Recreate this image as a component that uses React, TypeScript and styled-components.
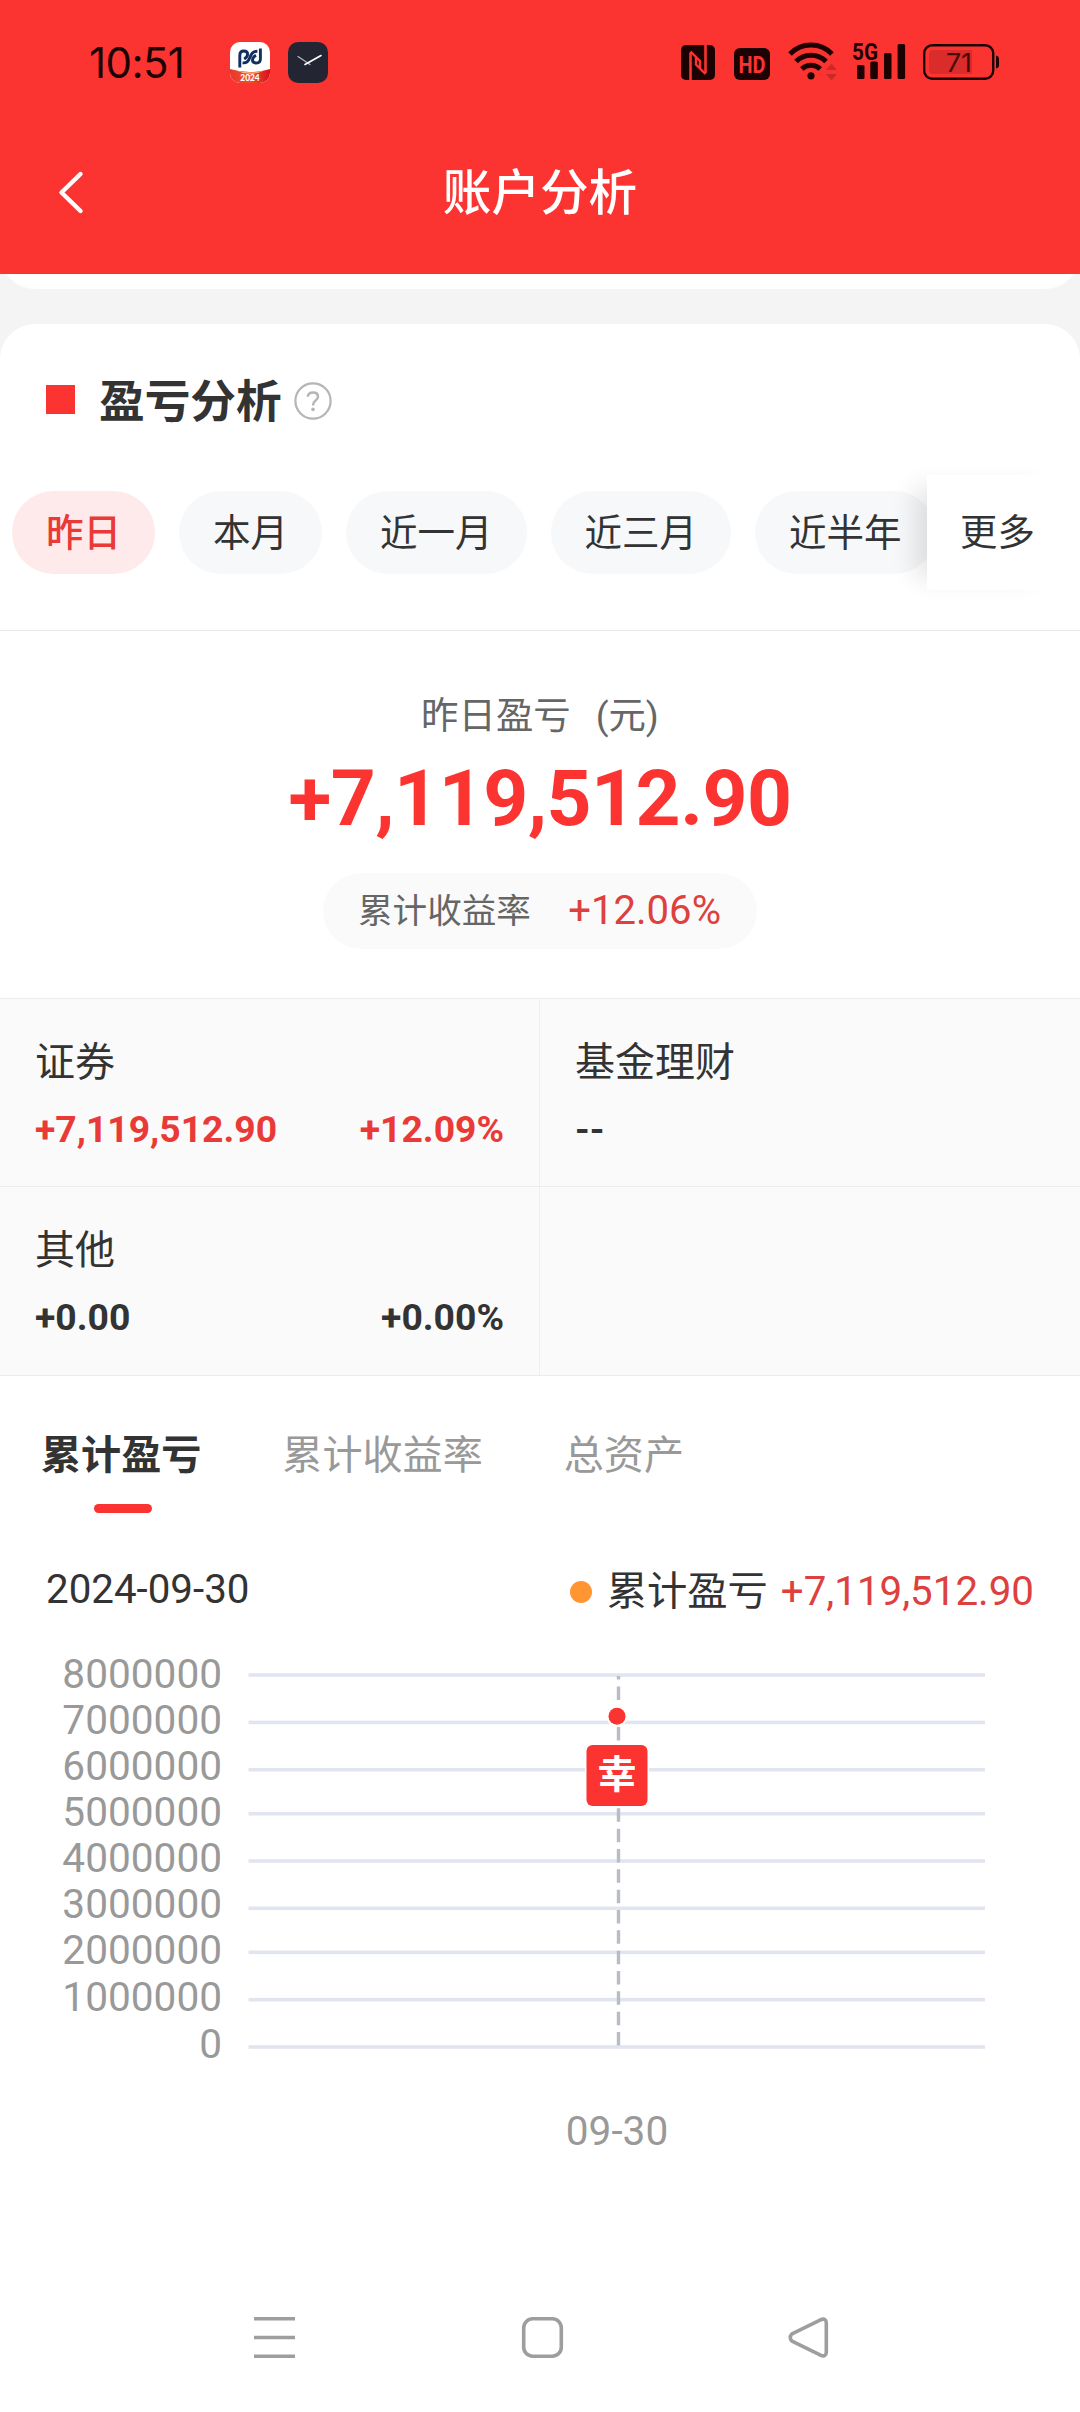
import React from "react";
import styled, { createGlobalStyle } from "styled-components";

const RED = "#fb3431";
const INK = "#1c0202";

const GlobalStyle = createGlobalStyle`
  * { box-sizing: border-box; }
  body {
    margin: 0;
    background: #f4f4f4;
    font-family: Roboto, "Noto Sans CJK SC", sans-serif;
    color: #333;
  }
`;

const Page = styled.div`
  width: 1080px;
  height: 2412px;
  display: flex;
  flex-direction: column;
  overflow: hidden;
  background: #f4f4f4;
`;

/* ---------- header ---------- */

const Header = styled.header`
  flex: none;
  height: 274px;
  background: ${RED};
`;

const StatusBar = styled.div`
  height: 124px;
  padding: 0 80px 0 89px;
  display: flex;
  align-items: center;
  justify-content: space-between;
`;

const StatusGroup = styled.div`
  display: flex;
  align-items: center;
`;

const Clock = styled.span`
  width: 141px;
  font-family: Inter, sans-serif;
  font-size: 42px;
  letter-spacing: -0.6px;
  line-height: 50px;
  color: ${INK};
  white-space: nowrap;
  padding-top: 2px;
`;

const AppIcon = styled.svg`
  width: 40px;
  height: 41px;
  margin-right: 18px;
`;

const StatusIcons = styled.svg`
  width: 320px;
  height: 54px;
  margin-top: -1px;
  overflow: visible;
`;

const TitleBar = styled.div`
  height: 138px;
  padding: 0 48px;
  display: grid;
  grid-template-columns: 60px 1fr 60px;
  align-items: center;
`;

const BackIcon = styled.svg`
  width: 44px;
  height: 50px;
`;

const PageTitle = styled.h1`
  margin: 2px 0 0;
  text-align: center;
  font-size: 48.6px;
  font-weight: 500;
  line-height: 60px;
  color: #fff;
`;

/* ---------- cards ---------- */

const PreviousCardClip = styled.div`
  flex: none;
  height: 15px;
  margin-bottom: 35px;
  display: flex;
  align-items: flex-end;
  overflow: hidden;
`;

const PreviousCard = styled.div`
  flex: 1;
  height: 80px;
  border-radius: 35px;
  background: #fff;
`;

const Card = styled.main`
  flex: 1;
  display: flex;
  flex-direction: column;
  border-radius: 35px 35px 0 0;
  background: #fff;
`;

const SectionHead = styled.div`
  height: 151px;
  padding-left: 46px;
  display: flex;
  align-items: center;
`;

const Marker = styled.i`
  width: 29px;
  height: 29px;
  margin-right: 24px;
  background: ${RED};
`;

const SectionTitle = styled.h2`
  margin: 6px 12px 0 0;
  font-size: 45.7px;
  font-weight: 700;
  line-height: 60px;
`;

const HelpIcon = styled.svg`
  width: 38px;
  height: 38px;
  margin-top: 2px;
`;

/* ---------- range filter ---------- */

const FilterRow = styled.div`
  height: 115px;
  display: flex;
  align-items: center;
  overflow: visible;
`;

const PillScroller = styled.div`
  width: 927px;
  padding-left: 12px;
  display: flex;
  gap: 24px;
  overflow: hidden;
`;

const Pill = styled.button<{ $active?: boolean }>`
  flex: none;
  height: 83px;
  padding: 0 34px;
  border: 0;
  border-radius: 42px;
  font-family: inherit;
  font-size: 37.5px;
  line-height: 80px;
  font-weight: ${(p) => (p.$active ? 500 : 400)};
  color: ${(p) => (p.$active ? "#e93a38" : "#333")};
  background: ${(p) => (p.$active ? "#feeaea" : "#f7f8fa")};
`;

const MoreButton = styled.button`
  width: 145px;
  height: 115px;
  padding: 0 4px 5px 0;
  border: 0;
  font-family: inherit;
  font-size: 37.4px;
  color: #333;
  background: #fff;
  box-shadow: -24px 0 24px -12px rgba(0, 0, 0, 0.11);
`;

const Divider = styled.div`
  height: 1px;
  margin-top: 40px;
  background: #e8e8e8;
`;

/* ---------- summary ---------- */

const Summary = styled.section`
  height: 367px;
  padding-top: 55px;
  display: flex;
  flex-direction: column;
  align-items: center;
`;

const SummaryLabel = styled.div`
  display: flex;
  gap: 25px;
  font-size: 37.4px;
  line-height: 60px;
  color: #666;
`;

const Total = styled.div`
  margin-top: 6px;
  font-size: 78.5px;
  font-weight: 700;
  letter-spacing: -0.5px;
  line-height: 92px;
  color: ${RED};
`;

const RatePill = styled.div`
  width: 434px;
  height: 76px;
  margin-top: 29px;
  padding: 0 36px 6px 35px;
  display: flex;
  align-items: center;
  justify-content: space-between;
  border-radius: 38px;
  background: #fafafa;
  font-size: 34.6px;
  color: #666;
`;

const Rate = styled.span`
  margin-top: 4px;
  font-size: 40.1px;
  color: #dd403d;
`;

/* ---------- breakdown ---------- */

const Breakdown = styled.section`
  display: grid;
  grid-template-columns: 540px 540px;
  grid-template-rows: 188px 189px;
  border-bottom: 1px solid #ececec;
`;

const Cell = styled.div`
  padding: 36px 35px 0 35px;
  border-top: 1px solid #ececec;
  background: #fafafa;

  &:nth-child(odd) {
    border-right: 1px solid #efefef;
  }
`;

const CellName = styled.div`
  font-size: 40px;
  line-height: 56px;
`;

const CellValues = styled.div<{ $up?: boolean }>`
  margin-top: 12px;
  display: flex;
  justify-content: space-between;
  font-size: 37.3px;
  font-weight: 700;
  line-height: 52px;
  color: ${(p) => (p.$up ? "#e93a38" : "#333")};
`;

/* ---------- tabs ---------- */

const Tabs = styled.nav`
  height: 138px;
  padding: 50px 41px 0;
  display: flex;
  gap: 81px;
`;

const Tab = styled.div<{ $active?: boolean }>`
  display: flex;
  flex-direction: column;
  align-items: center;
  font-size: 40.1px;
  line-height: 60px;
  font-weight: ${(p) => (p.$active ? 700 : 400)};
  color: ${(p) => (p.$active ? "#333" : "#999")};
`;

const TabBar = styled.i`
  width: 58px;
  height: 9px;
  margin: 18px 0 0 3px;
  border-radius: 5px;
  background: ${RED};
`;

const LegendRow = styled.div`
  height: 146px;
  padding: 8px 46px 0 46px;
  display: flex;
  align-items: center;
  justify-content: space-between;
  font-size: 40.3px;
  line-height: 56px;
`;

const DateText = styled.span`
  margin-top: -3px;
`;

const Legend = styled.div`
  display: flex;
  align-items: center;
  margin-top: 2px;
`;

const LegendDot = styled.i`
  width: 22px;
  height: 22px;
  margin-right: 15px;
  border-radius: 50%;
  background: #ff9632;
`;

const LegendValue = styled.span`
  margin-left: 13px;
  color: #dd403d;
`;

const ChartSvg = styled.svg`
  flex: none;
  width: 1080px;
  height: 540px;
  overflow: visible;
  font-family: Roboto, "Noto Sans CJK SC", sans-serif;
  font-size: 40.6px;
`;

const SystemNav = styled.svg`
  flex: none;
  width: 1080px;
  height: 140px;
  margin-top: auto;
`;

const periods = ["昨日", "本月", "近一月", "近三月", "近半年"];

const breakdown = [
  { name: "证券", amount: "+7,119,512.90", rate: "+12.09%", up: true },
  { name: "基金理财", amount: "--" },
  { name: "其他", amount: "+0.00", rate: "+0.00%" },
  null,
];

/* y positions are relative to the top of the chart */
const axis = [
  { value: 8000000, label: 28, line: 15 },
  { value: 7000000, label: 74, line: 62.4 },
  { value: 6000000, label: 120, line: 109.7 },
  { value: 5000000, label: 166, line: 153.7 },
  { value: 4000000, label: 212.2, line: 201 },
  { value: 3000000, label: 258.3, line: 248.3 },
  { value: 2000000, label: 304.4, line: 292.3 },
  { value: 1000000, label: 350.5, line: 339.7 },
  { value: 0, label: 397.5, line: 387 },
];

function Chart() {
  return (
    <ChartSvg viewBox="0 0 1080 540">
      {axis.map((a) => (
        <g key={a.value}>
          <text x="222" y={a.label} textAnchor="end" fill="#999">
            {a.value}
          </text>
          <rect x="248.5" y={a.line - 1.8} width="736.5" height="3.6" fill="#e1e5f0" />
        </g>
      ))}
      <line x1="618.5" y1="385.5" x2="618.5" y2="16" stroke="#b8bcc6" strokeWidth="3.4" strokeDasharray="13.5 6.83" />
      <circle cx="617" cy="56.3" r="10.5" fill="#fff" />
      <circle cx="617" cy="56.3" r="8.5" fill={RED} />
      <rect x="585" y="83.5" width="64" height="64" rx="7" fill="#fff" />
      <rect x="586.5" y="85" width="61" height="61" rx="6" fill={RED} />
      <text x="617" y="127.5" fontSize="39" fontWeight="700" textAnchor="middle" fill="#fff">
        幸
      </text>
      <text x="617" y="484.5" textAnchor="middle" fill="#999">
        09-30
      </text>
    </ChartSvg>
  );
}

function BrokerIcon() {
  return (
    <AppIcon viewBox="0 0 40 41">
      <defs>
        <clipPath id="brokerClip">
          <rect width="40" height="41" rx="10" />
        </clipPath>
        <linearGradient id="brokerBand" x1="0" y1="0" x2="1" y2="0">
          <stop offset="0" stopColor="#e8382a" />
          <stop offset="0.5" stopColor="#f0502c" />
          <stop offset="1" stopColor="#d9101c" />
        </linearGradient>
      </defs>
      <g clipPath="url(#brokerClip)">
        <rect width="40" height="41" fill="#fff" />
        <path d="M0 27 Q20 33 40 27 V41 H0Z" fill="url(#brokerBand)" />
        <path d="M6 28.6 Q20 32.6 34 28.6 Q20 35 6 28.6Z" fill="#fbc58c" />
        <g fill="none" stroke="#12305f" strokeWidth="2.9">
          <path d="M9.8 25.5 V13.4 Q9.8 9 13.8 9 Q17.6 9 17.6 12.2 Q17.6 15 14.2 17" />
          <path d="M12.6 20.8 Q17.6 21.6 19.9 15.4 Q22.2 9 27.4 9.2" />
          <path d="M30.4 6.5 V17 Q30.4 21 26.4 21 Q22.5 21 22.5 18 Q22.5 15.2 26 13.2" />
        </g>
        <text x="20" y="38.6" textAnchor="middle" fontFamily="Lato, sans-serif" fontSize="8.4" fontWeight="900" fill="#fff">
          2024
        </text>
      </g>
    </AppIcon>
  );
}

function ClockIcon() {
  return (
    <AppIcon viewBox="0 0 40 41">
      <rect width="40" height="41" rx="10" fill="#232632" />
      <path d="M10 14.5 L22 22.5" stroke="#b9bac0" strokeWidth="1.2" strokeLinecap="round" />
      <path d="M17 22.5 L33 13.5" stroke="#fff" strokeWidth="1.6" strokeLinecap="round" />
    </AppIcon>
  );
}

function SystemIcons() {
  return (
    <StatusIcons viewBox="680 35 320 54">
      <rect x="681" y="45" width="34" height="35" rx="5" fill={INK} />
      <path d="M690.5 80 V52.5 M705.5 73 V45" fill="none" stroke={RED} strokeWidth="2.6" />
      <path d="M690.5 51.5 L700 61 V68.5 M696 57 V64.5 L705.5 74" fill="none" stroke={RED} strokeWidth="2.4" />
      <rect x="734" y="48" width="36" height="32" rx="6" fill={INK} />
      <text x="752" y="72.6" textAnchor="middle" fontFamily="Roboto, sans-serif" fontSize="24" fontWeight="700" textLength="27" lengthAdjust="spacingAndGlyphs" fill={RED}>
        HD
      </text>
      <g fill="none" stroke={INK} strokeWidth="5">
        <path d="M790 54 A29 29 0 0 1 832 54" />
        <path d="M796 61.5 A21 21 0 0 1 826 61.5" />
        <path d="M801.8 69 A13 13 0 0 1 820.2 69" />
      </g>
      <circle cx="811" cy="75.8" r="3.6" fill={INK} />
      <path d="M826 70 L831.5 63.5 L837 70Z M826 74 L831.5 80.5 L837 74Z" fill="#cc2a28" />
      <text x="852" y="59.8" fontFamily="Roboto, sans-serif" fontSize="24.5" fontWeight="700" textLength="26" lengthAdjust="spacingAndGlyphs" fill={INK}>
        5G
      </text>
      <g fill={INK}>
        <rect x="857" y="65" width="7.5" height="14" rx="1.5" />
        <rect x="870.3" y="61.5" width="7.5" height="17.5" rx="1.5" />
        <rect x="884" y="53" width="7.5" height="26" rx="1.5" />
        <rect x="897.6" y="44" width="7.5" height="35" rx="1.5" />
      </g>
      <rect x="924.2" y="45.2" width="69" height="33.6" rx="8" fill="none" stroke={INK} strokeWidth="2.4" />
      <path d="M933 50 H972 V74 H933 Q929 74 929 70 V54 Q929 50 933 50Z" fill="#d92c2b" />
      <path d="M996 55.5 Q999 56 999 59 V65 Q999 68 996 68.5Z" fill={INK} />
      <text x="959" y="72" textAnchor="middle" fontFamily="Inter, sans-serif" fontSize="26" textLength="26" lengthAdjust="spacingAndGlyphs" fill="#4a0a0a">
        71
      </text>
    </StatusIcons>
  );
}

export default function App() {
  return (
    <Page>
      <GlobalStyle />
      <Header>
        <StatusBar>
          <StatusGroup>
            <Clock>10:51</Clock>
            <BrokerIcon />
            <ClockIcon />
          </StatusGroup>
          <SystemIcons />
        </StatusBar>
        <TitleBar>
          <BackIcon viewBox="48 168 44 50">
            <path d="M80.5 174 L61.5 192.5 L80.5 211" fill="none" stroke="#fff" strokeWidth="4.4" strokeLinecap="round" strokeLinejoin="round" />
          </BackIcon>
          <PageTitle>账户分析</PageTitle>
        </TitleBar>
      </Header>

      <PreviousCardClip>
        <PreviousCard />
      </PreviousCardClip>

      <Card>
        <SectionHead>
          <Marker />
          <SectionTitle>盈亏分析</SectionTitle>
          <HelpIcon viewBox="0 0 38 38">
            <circle cx="19" cy="19" r="17.6" fill="none" stroke="#b5b5b5" strokeWidth="2.2" />
            <path d="M13.8 14.8 Q14 10.4 19 10.4 Q24 10.4 24 14.6 Q24 17 21.4 18.8 Q19 20.6 19 23.4" fill="none" stroke="#b5b5b5" strokeWidth="2.5" />
            <circle cx="19" cy="27.4" r="1.8" fill="#b5b5b5" />
          </HelpIcon>
        </SectionHead>

        <FilterRow>
          <PillScroller>
            {periods.map((p, i) => (
              <Pill key={p} $active={i === 0}>
                {p}
              </Pill>
            ))}
          </PillScroller>
          <MoreButton>更多</MoreButton>
        </FilterRow>
        <Divider />

        <Summary>
          <SummaryLabel>
            <span>昨日盈亏</span>
            <span>(元)</span>
          </SummaryLabel>
          <Total>+7,119,512.90</Total>
          <RatePill>
            <span>累计收益率</span>
            <Rate>+12.06%</Rate>
          </RatePill>
        </Summary>

        <Breakdown>
          {breakdown.map((item, i) => (
            <Cell key={i}>
              {item && (
                <>
                  <CellName>{item.name}</CellName>
                  <CellValues $up={item.up}>
                    <span>{item.amount}</span>
                    {item.rate && <span>{item.rate}</span>}
                  </CellValues>
                </>
              )}
            </Cell>
          ))}
        </Breakdown>

        <Tabs>
          <Tab $active>
            累计盈亏
            <TabBar />
          </Tab>
          <Tab>累计收益率</Tab>
          <Tab>总资产</Tab>
        </Tabs>

        <LegendRow>
          <DateText>2024-09-30</DateText>
          <Legend>
            <LegendDot />
            <span>累计盈亏</span>
            <LegendValue>+7,119,512.90</LegendValue>
          </Legend>
        </LegendRow>

        <Chart />

        <SystemNav viewBox="0 2272 1080 140">
          <g fill="none" stroke="#9e9e9e" strokeWidth="3.6" strokeLinejoin="round">
            <path d="M254 2318.8 H295 M254 2337.5 H295 M254 2356.2 H295" />
            <rect x="523.7" y="2318.8" width="37.6" height="37.4" rx="9" />
            <path d="M792 2333.8 L820.5 2319.8 Q826.3 2317.6 826.3 2323 V2352 Q826.3 2357.4 820.5 2355.2 L792 2341.2 Q788.4 2337.5 792 2333.8Z" />
          </g>
        </SystemNav>
      </Card>
    </Page>
  );
}
